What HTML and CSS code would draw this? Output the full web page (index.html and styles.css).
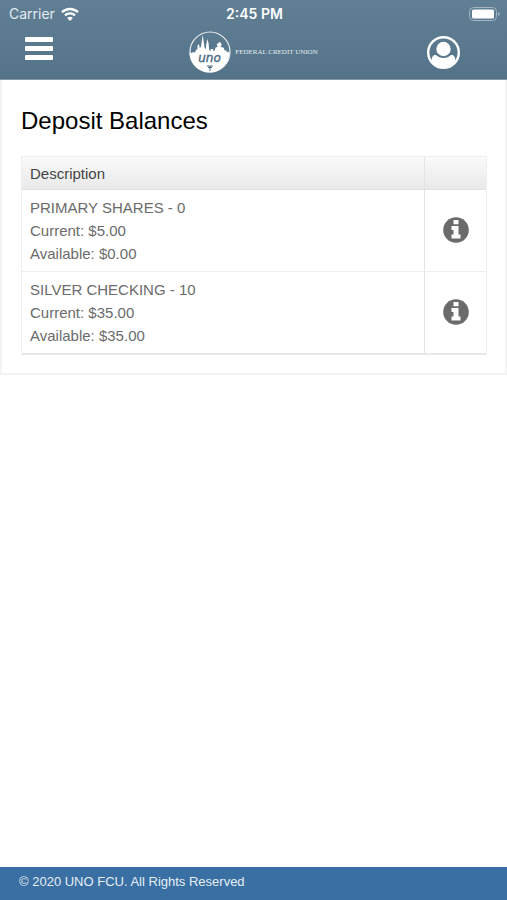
FILE: index.html
```html
<!DOCTYPE html>
<html lang="en">
<head>
  <meta charset="utf-8">
  <meta name="viewport" content="width=device-width, initial-scale=1">
  <title>Deposit Balances</title>
  <link rel="stylesheet" href="styles.css">
</head>
<body>
  <header class="header">
    <div class="status-bar">
      <div class="carrier">
        <span>Carrier</span>
        <svg class="wifi" viewBox="0 0 18 14" aria-hidden="true">
          <path d="M1 5.2a11.6 11.6 0 0 1 16 0" />
          <path d="M4 8.4a7.2 7.2 0 0 1 10 0" />
          <path class="solid" d="M9 14 6.2 11a4 4 0 0 1 5.6 0z" />
        </svg>
      </div>
      <span class="time">2:45 PM</span>
      <svg class="battery" viewBox="0 0 31 14" aria-hidden="true">
        <rect class="shell" x="0.5" y="0.5" width="27" height="13" rx="4" />
        <rect class="charge" x="3" y="2.5" width="22" height="9" rx="1.5" />
        <path class="tip" d="M29 5c2.4 1 2.4 3 0 4z" />
      </svg>
    </div>

    <div class="nav-bar">
      <button class="icon-btn menu-btn" type="button" aria-label="Menu">
        <svg viewBox="0 0 28 24" width="28" height="24" aria-hidden="true">
          <rect x="0" y="0" width="28" height="5" rx="1" />
          <rect x="0" y="9" width="28" height="5" rx="1" />
          <rect x="0" y="18" width="28" height="5" rx="1" />
        </svg>
      </button>

      <a class="logo" href="#">
        <svg class="logo-mark" viewBox="0 0 42 42" aria-hidden="true">
          <circle class="ring" cx="21" cy="21" r="20" />
          <path class="skyline" d="M1 21.5l2 .5 1-1 2 .5 1-2.500 1.500-1v-3l1-2 1 2v2l1.500-1 .5-4 1.200-8 1.200 8 .7 5 1.200 1 .5-5 1.200-5 1.200 5 .4 6 1.500 1v-2h2.500v2l1.500-.5 1-3 2-.5v-1l-1-1 1.500-2 1.500-1 1.500 1 .5 2.500-1.500 1 4 1.500v2l2 .5 1 2 1-1 1.400 1a20 20 0 0 1-40 0z" />
          <text class="logo-name" x="20.500" y="31">uno</text>
          <path class="torch" d="M18 35h6M19 36.5h4M21 35v5" />
        </svg>
        <span class="logo-text">FEDERAL CREDIT UNION</span>
      </a>

      <button class="icon-btn user-btn" type="button" aria-label="Profile">
        <svg viewBox="0 0 33 33" width="33" height="33" aria-hidden="true">
          <circle class="user-ring" cx="16.5" cy="16.5" r="15.3" />
          <circle cx="16.5" cy="13" r="7.2" />
          <path d="M4.500 25c.2-4 1.500-6.500 4.500-6 4 4 11 4 15 0 3-.5 4.300 2 4.500 6-2.500 4.500-7 7-12 7s-9.500-2.500-12-7z" />
        </svg>
      </button>
    </div>
  </header>

  <main class="panel">
    <h1>Deposit Balances</h1>
    <table class="balances">
      <thead>
        <tr>
          <th scope="col">Description</th>
          <td class="info-col"></td>
        </tr>
      </thead>
      <tbody>
        <tr>
          <td>
            <div>PRIMARY SHARES - 0</div>
            <div>Current: $5.00</div>
            <div>Available: $0.00</div>
          </td>
          <td class="info-col">
            <button class="icon-btn info-btn" type="button" aria-label="Primary Shares details">
              <svg viewBox="0 0 26 26" width="26" height="26" aria-hidden="true">
                <circle cx="13" cy="13" r="12.8" />
                <path class="info-mark" d="M10.5 3h5v4.2h-5zM8.5 9h7v8.5h2v4h-9v-4h2V13h-2z" />
              </svg>
            </button>
          </td>
        </tr>
        <tr>
          <td>
            <div>SILVER CHECKING - 10</div>
            <div>Current: $35.00</div>
            <div>Available: $35.00</div>
          </td>
          <td class="info-col">
            <button class="icon-btn info-btn" type="button" aria-label="Silver Checking details">
              <svg viewBox="0 0 26 26" width="26" height="26" aria-hidden="true">
                <circle cx="13" cy="13" r="12.8" />
                <path class="info-mark" d="M10.5 3h5v4.2h-5zM8.5 9h7v8.5h2v4h-9v-4h2V13h-2z" />
              </svg>
            </button>
          </td>
        </tr>
      </tbody>
    </table>
  </main>

  <footer class="footer">© 2020 UNO FCU. All Rights Reserved</footer>
</body>
</html>
```

FILE: styles.css
```css
* {
  box-sizing: border-box;
}

body {
  display: flex;
  flex-direction: column;
  min-height: 100vh;
  margin: 0;
  background: #fff;
  color: #6b6b6b;
  font-family: "Liberation Sans", Arial, sans-serif;
  font-size: 15px;
}

/* Header */
.header {
  background: linear-gradient(#607f95, #557388);
  border-bottom: 1px solid #8298a7;
  color: #fff;
}

.status-bar {
  display: grid;
  grid-template-columns: 1fr auto 1fr;
  align-items: center;
  height: 27px;
  padding: 0 7px 0 9px;
  font-family: Inter, sans-serif;
}

.carrier {
  display: flex;
  align-items: center;
  gap: 6px;
  color: #e3ebf0;
  font-size: 14px;
}

.wifi {
  width: 18px;
  height: 14px;
  fill: none;
  stroke: #fff;
  stroke-width: 2.4;
}

.wifi .solid {
  fill: #fff;
  stroke: none;
}

.time {
  font-size: 14px;
  font-weight: 600;
}

.battery {
  width: 31px;
  height: 14px;
  justify-self: end;
}

.shell {
  fill: none;
  stroke: #a3b5c1;
}

.charge {
  fill: #fff;
}

.tip {
  fill: #a3b5c1;
}

.nav-bar {
  display: grid;
  grid-template-columns: 1fr auto 1fr;
  align-items: center;
  height: 52px;
  padding: 0 25px 2px;
}

.icon-btn {
  display: inline-block;
  padding: 0;
  border: none;
  background: none;
  cursor: pointer;
}

.icon-btn svg {
  display: block;
  fill: #fff;
}

.menu-btn {
  justify-self: start;
  padding-bottom: 6px;
}

.user-btn {
  justify-self: end;
  margin-right: 22px;
}

.user-ring {
  fill: none;
  stroke: #fff;
  stroke-width: 2.4;
}

.logo {
  display: flex;
  align-items: center;
  gap: 4px;
  color: #fff;
  text-decoration: none;
}

.logo-mark {
  width: 42px;
  height: 42px;
}

.ring {
  fill: none;
  stroke: #e8eef2;
  stroke-width: 1.2;
}

.skyline {
  fill: #fff;
}

.logo-name {
  fill: #4c697f;
  font: italic 12px "DejaVu Sans", sans-serif;
  stroke: #4c697f;
  stroke-width: 0.4;
  text-anchor: middle;
}

.torch {
  fill: none;
  stroke: #4c697f;
}

.logo-text {
  color: #e6edf1;
  font-family: "Liberation Serif", serif;
  font-size: 7px;
}

/* Balances */
.panel {
  padding: 24px 18px 18px 19px;
  border: 2px solid #f4f4f4;
  border-top: none;
}

h1 {
  margin: 0 0 18px;
  color: #000;
  font-size: 24px;
  font-weight: normal;
  line-height: 34px;
}

.balances {
  width: 100%;
  border: 1px solid #eee;
  border-bottom: 2px solid #e8e8e8;
  border-spacing: 0;
  line-height: 23px;
}

.balances th,
.balances td {
  padding: 6px 8px;
  text-align: left;
}

.balances thead th,
.balances thead td {
  height: 33px;
  padding: 4px 8px;
  border-bottom: 1px solid #e2e2e2;
  background: linear-gradient(#fafafa, #e9e9e9);
  color: #444;
  font-weight: normal;
}

.balances tbody td {
  border-bottom: 1px solid #eee;
}

.balances tbody tr:last-child td {
  border-bottom: none;
}

.balances .info-col {
  width: 62px;
  border-left: 1px solid #e4e4e4;
}

.info-btn {
  display: block;
  margin: 0 auto;
  padding-bottom: 2px;
}

.info-btn svg {
  fill: #6b6b6b;
}

.info-btn .info-mark {
  fill: #fff;
}

/* Footer */
.footer {
  margin-top: auto;
  padding: 5px 19px 8px;
  background: #396fa3;
  color: #e6eef5;
  font-size: 13px;
  line-height: 20px;
}
```
